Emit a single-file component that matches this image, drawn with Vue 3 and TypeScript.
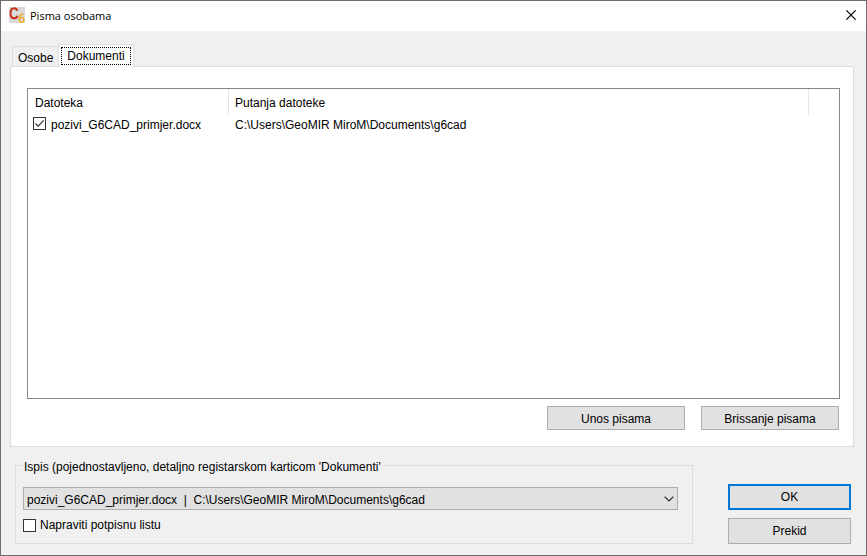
<script setup lang="ts">
import { ref } from 'vue'

interface Doc {
  name: string
  path: string
  checked: boolean
}

const tabs = ['Osobe', 'Dokumenti']
const activeTab = ref('Dokumenti')
const docs = ref<Doc[]>([
  { name: 'pozivi_G6CAD_primjer.docx', path: 'C:\\Users\\GeoMIR MiroM\\Documents\\g6cad', checked: true },
])
const selected = ref(0)
const signatureList = ref(false)
</script>

<template>
  <main class="window">
    <header class="titlebar">
      <svg class="logo" viewBox="0 0 16 16" aria-hidden="true">
        <rect width="16" height="16" fill="#d9d9d9" />
        <path d="M8.300 3.700C7.800 1.900 6.800 1.300 5.100 1.300C2.500 1.300 1.500 3.100 1.500 6.300S2.500 11.300 5.100 11.300C6.900 11.300 8 10.500 8.400 8.700" fill="none" stroke="#c83018" stroke-width="2" />
        <path d="M14.500 7.300C11.700 6.800 10.200 8.500 10.200 12C10.200 14.200 11 15.200 12.500 15.200S14.900 14.200 14.900 12.700S14 10.400 12.600 10.400S10.300 11.300 10.200 12.500" fill="none" stroke="#f0b030" stroke-width="1.500" />
      </svg>
      <h1 class="title">Pisma osobama</h1>
      <button class="close" type="button" aria-label="Zatvori">
        <svg viewBox="0 0 10 10" aria-hidden="true">
          <path d="M0.300 0.300L9.700 9.700M9.700 0.300L0.300 9.700" stroke="#000" stroke-width="1.200" />
        </svg>
      </button>
    </header>

    <div class="content">
      <div class="tabs" role="tablist">
        <button
          v-for="tab in tabs"
          :key="tab"
          class="tab"
          :class="{ active: tab === activeTab }"
          type="button"
          role="tab"
          :aria-selected="tab === activeTab"
          @click="activeTab = tab"
        >
          <span class="tab-label">{{ tab }}</span>
        </button>
      </div>

      <section class="panel" role="tabpanel">
        <div class="list">
          <table class="table">
            <colgroup>
              <col class="col-name" />
              <col class="col-path" />
              <col />
            </colgroup>
            <thead>
              <tr>
                <th scope="col">Datoteka</th>
                <th scope="col">Putanja datoteke</th>
                <td></td>
              </tr>
            </thead>
            <tbody>
              <tr v-for="doc in docs" :key="doc.name">
                <td class="name-cell">
                  <label class="check">
                    <span class="box">
                      <input v-model="doc.checked" type="checkbox" />
                      <svg v-if="doc.checked" viewBox="0 0 13 13" aria-hidden="true">
                        <path d="M2.500 6.500L5.200 9.200L10.700 3.400" />
                      </svg>
                    </span>
                    <span>{{ doc.name }}</span>
                  </label>
                </td>
                <td>{{ doc.path }}</td>
                <td></td>
              </tr>
            </tbody>
          </table>
        </div>
        <div class="panel-actions">
          <button class="btn" type="button">Unos pisama</button>
          <button class="btn" type="button">Brissanje pisama</button>
        </div>
      </section>

      <footer class="footer">
        <fieldset class="group">
          <legend>Ispis (pojednostavljeno, detaljno registarskom karticom 'Dokumenti'</legend>
          <div class="combo">
            <select v-model="selected" aria-label="Ispis">
              <option v-for="(doc, i) in docs" :key="i" :value="i">{{ doc.name }}&nbsp; |&nbsp; {{ doc.path }}</option>
            </select>
            <svg viewBox="0 0 10 6" aria-hidden="true">
              <path d="M0.700 0.800L5 5L9.300 0.800" />
            </svg>
          </div>
          <label class="check">
            <span class="box">
              <input v-model="signatureList" type="checkbox" />
              <svg v-if="signatureList" viewBox="0 0 13 13" aria-hidden="true">
                <path d="M2.500 6.500L5.200 9.200L10.700 3.400" />
              </svg>
            </span>
            <span>Napraviti potpisnu listu</span>
          </label>
        </fieldset>
        <div class="dialog-actions">
          <button class="btn primary" type="button">OK</button>
          <button class="btn" type="button">Prekid</button>
        </div>
      </footer>
    </div>
  </main>
</template>

<style>
body {
  margin: 0;
}
</style>

<style scoped>
.window,
.window * {
  box-sizing: border-box;
}
.window {
  display: flex;
  flex-direction: column;
  min-height: 100vh;
  border: 1px solid #6f6d6d;
  background: #f0f0f0;
  color: #000;
  font: 12px/16px "Liberation Sans", Arial, sans-serif;
}
button,
select {
  font: inherit;
  color: inherit;
}
.titlebar {
  display: flex;
  align-items: center;
  height: 30px;
  padding: 0 10px 2px 8px;
  background: #fff;
}
.logo {
  width: 16px;
  height: 16px;
}
.title {
  flex: 1;
  margin: 0 0 0 5px;
  padding-top: 2px;
  font: 11px/16px "Open Sans", "Noto Sans", sans-serif;
}
.close {
  display: flex;
  padding: 0;
  border: 0;
  background: none;
}
.close svg {
  width: 10px;
  height: 10px;
}
.content {
  flex: 1;
  display: flex;
  flex-direction: column;
  padding: 13px 12px 11px 9px;
}
.tabs {
  display: flex;
  align-items: flex-end;
  padding-left: 2px;
}
.tab {
  height: 20px;
  padding: 2px 5px 0;
  border: 1px solid #dcdcdc;
  border-width: 1px 0 0 1px;
  background: #f0f0f0;
}
.tab.active {
  position: relative;
  height: 23px;
  margin-bottom: -1px;
  padding: 2px;
  border-right-width: 1px;
  background: #fff;
}
.tab-label {
  display: block;
}
.active .tab-label {
  padding: 0 5px;
  border: 1px dotted #000;
}
.panel {
  flex: 1;
  display: flex;
  flex-direction: column;
  gap: 7px;
  padding: 21px 13px 16px 16px;
  border: 1px solid #dcdcdc;
  background: #fff;
}
.list {
  flex: 1;
  border: 1px solid #828790;
}
.table {
  width: 100%;
  table-layout: fixed;
  border-collapse: separate;
  border-spacing: 0;
}
.col-name {
  width: 201px;
}
.col-path {
  width: 580px;
}
.table th {
  height: 26px;
  padding: 2px 6px 0;
  border-right: 1px solid #e5e5e5;
  font-weight: normal;
  text-align: left;
}
.table th:first-child {
  padding-left: 7px;
}
.table td {
  padding: 2px 6px 0;
}
.table .name-cell {
  padding-left: 5px;
}
.check {
  display: flex;
  align-items: center;
  gap: 4px;
}
.name-cell .check {
  align-items: flex-start;
  gap: 5px;
}
.box {
  position: relative;
  width: 13px;
  height: 13px;
}
.box input {
  display: block;
  appearance: none;
  width: 13px;
  height: 13px;
  margin: 0;
  border: 1px solid #333;
  background: #fff;
}
.box svg {
  position: absolute;
  inset: 0;
  pointer-events: none;
}
.box path,
.combo path {
  fill: none;
  stroke: #333;
  stroke-width: 1.2;
}
.panel-actions {
  display: flex;
  justify-content: flex-end;
  gap: 16px;
  padding-right: 1px;
}
.btn {
  width: 138px;
  height: 24px;
  padding: 1px 0 0;
  border: 1px solid #adadad;
  background: #e1e1e1;
}
.footer {
  display: flex;
  align-items: flex-end;
  gap: 35px;
  padding: 9px 3px 0 5px;
}
.group {
  flex: 1;
  min-width: 0;
  margin: 0;
  padding: 12px 14px 10px 7px;
  border: 1px solid #dcdcdc;
}
.group legend {
  padding: 3px 2px 0 1px;
}
.combo {
  position: relative;
  margin-bottom: 7px;
}
.combo select {
  display: block;
  appearance: none;
  width: 100%;
  height: 23px;
  padding: 2px 24px 0 3px;
  border: 1px solid #adadad;
  border-radius: 0;
  background: #e1e1e1;
}
.combo svg {
  position: absolute;
  top: 9px;
  right: 4px;
  width: 10px;
  height: 6px;
  pointer-events: none;
}
.dialog-actions {
  display: flex;
  flex-direction: column;
  gap: 8px;
}
.dialog-actions .btn {
  width: 123px;
  height: 26px;
  padding: 0;
}
.btn.primary {
  border: 2px solid #0078d7;
}
</style>
